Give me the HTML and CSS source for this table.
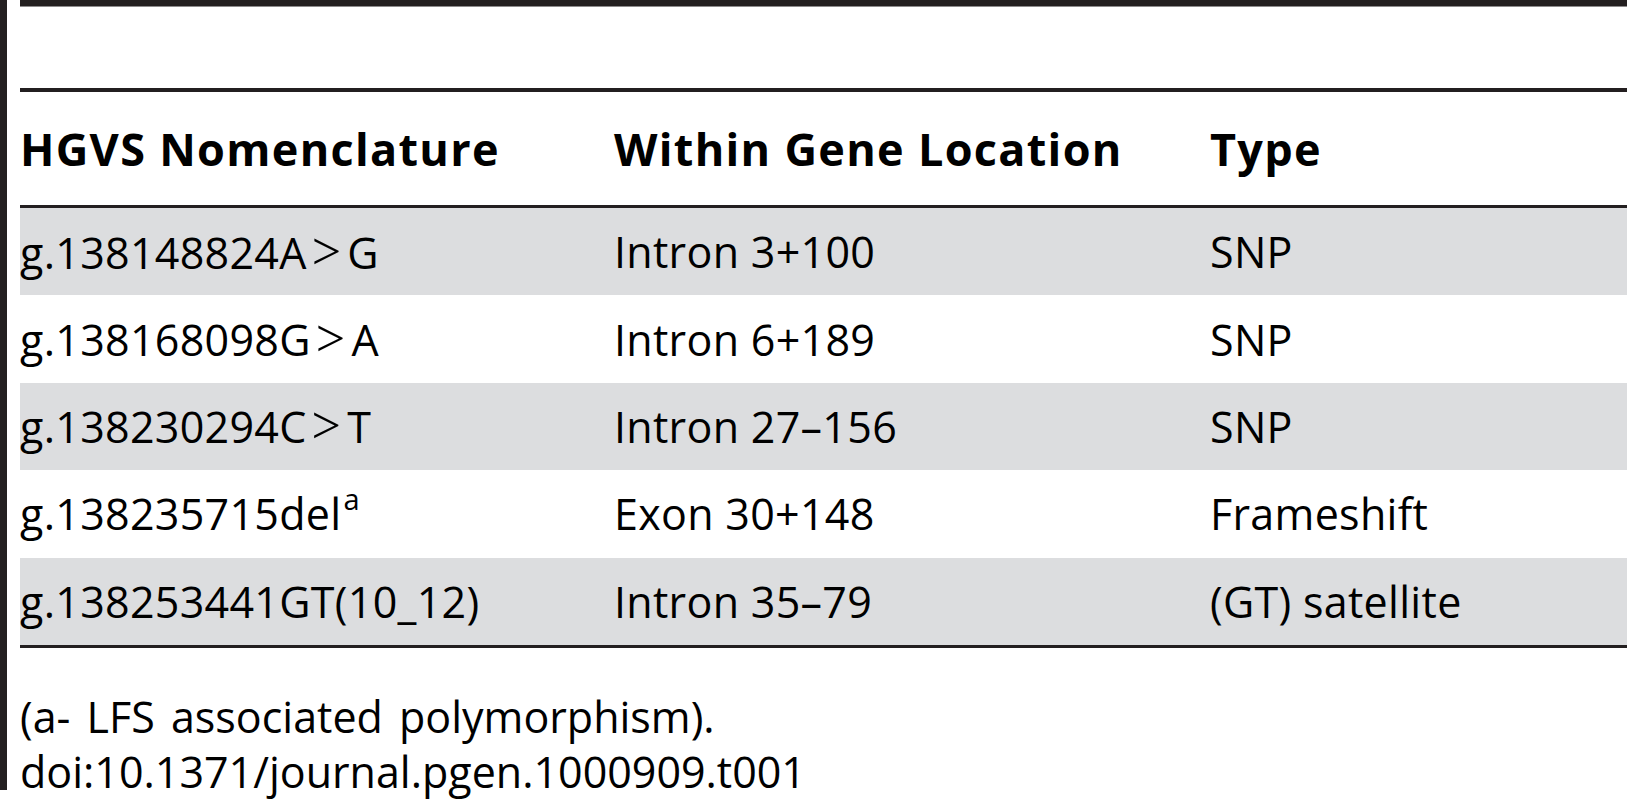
FILE: index.html
```html
<!DOCTYPE html>
<html>
<head>
<meta charset="utf-8">
<link rel="stylesheet" href="styles.css">
</head>
<body>
<div class="page">
  <div class="leftbar"></div>
  <div class="content">
    <div class="topbar"></div>
    <div class="table">
      <div class="row head">
        <div class="cell">HGVS Nomenclature</div>
        <div class="cell">Within Gene Location</div>
        <div class="cell">Type</div>
      </div>
      <div class="row shade">
        <div class="cell">g.138148824A<span class="gt">&gt;</span>G</div>
        <div class="cell">Intron 3+100</div>
        <div class="cell">SNP</div>
      </div>
      <div class="row">
        <div class="cell">g.138168098G<span class="gt">&gt;</span>A</div>
        <div class="cell">Intron 6+189</div>
        <div class="cell">SNP</div>
      </div>
      <div class="row shade">
        <div class="cell">g.138230294C<span class="gt">&gt;</span>T</div>
        <div class="cell">Intron 27–156</div>
        <div class="cell">SNP</div>
      </div>
      <div class="row">
        <div class="cell">g.138235715del<sup class="sup">a</sup></div>
        <div class="cell">Exon 30+148</div>
        <div class="cell">Frameshift</div>
      </div>
      <div class="row shade">
        <div class="cell">g.138253441GT(10_12)</div>
        <div class="cell">Intron 35–79</div>
        <div class="cell">(GT) satellite</div>
      </div>
    </div>
    <div class="notes">
      <div class="note first">(a- LFS associated polymorphism).</div>
      <div class="note">doi:10.1371/journal.pgen.1000909.t001</div>
    </div>
  </div>
</div>
</body>
</html>
```
FILE: styles.css
```css
html, body {
  margin: 0;
  padding: 0;
  background: #ffffff;
}
body {
  font-family: "Open Sans", "DejaVu Sans", sans-serif;
  color: #000000;
  width: 1627px;
  height: 800px;
  overflow: hidden;
}
.page {
  display: flex;
  align-items: flex-start;
}
.leftbar {
  width: 7px;
  height: 790px;
  background: #231f20;
  flex: none;
}
.content {
  margin-left: 13px;
  flex: 1;
}
.topbar {
  height: 6px;
  background: #231f20;
  border-bottom: 1px solid #8d8b8c;
}
.table {
  margin-top: 81px;
  border-top: 4px solid #231f20;
  border-bottom: 3px solid #231f20;
}
.row {
  display: grid;
  grid-template-columns: 594px 596px 1fr;
  height: 87.4px;
  align-items: center;
  font-size: 43px;
  letter-spacing: 0.3px;
  line-height: 1;
}
.row.head {
  height: 113px;
  font-weight: 700;
  font-size: 45px;
  letter-spacing: 1.3px;
  border-bottom: 3px solid #231f20;
}
.row.shade {
  background: #dcdddf;
}
.cell {
  white-space: nowrap;
}
.gt {
  font-family: "Liberation Serif", "DejaVu Serif", serif;
  font-size: 52px;
  margin: 0 6px 0 5px;
}
.sup {
  font-size: 29px;
  line-height: 0;
  vertical-align: 0;
  position: relative;
  top: -20px;
  margin-left: 2px;
}
.notes {
  padding-top: 41px;
  font-size: 43px;
  line-height: 55px;
}
.note.first {
  word-spacing: 5px;
}
```
